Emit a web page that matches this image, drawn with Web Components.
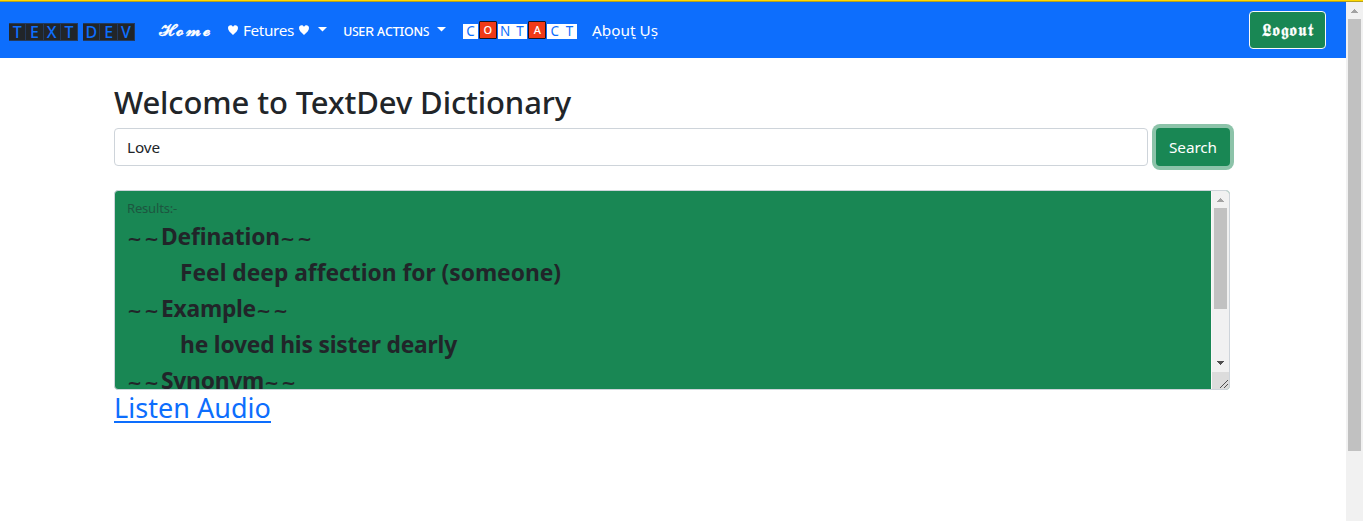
<!DOCTYPE html>
<html lang="en"><head><meta charset="utf-8"><title>TextDev Dictionary</title>
<style>
html,body{margin:0;height:100%;overflow:hidden;background:#fff}
body{font:15.3px/24px "Noto Sans","DejaVu Sans",sans-serif;color:#212529}
</style></head><body><app-page></app-page>
<script>
const define=(name,html,init)=>customElements.define(name,class extends HTMLElement{
  constructor(){super();this.attachShadow({mode:"open"}).innerHTML=html}
  connectedCallback(){if(init)init(this)}
});

/* Text run spread to the width given in its "w" attribute */
define("fit-text",`<style>:host{display:inline-block;white-space:pre}span{display:inline-block}</style><span><slot></slot></span>`,el=>{
  const w=+el.getAttribute("w"),s=el.shadowRoot.querySelector("span");
  const n=[...el.textContent].filter(c=>c!=="\u0323").length;
  el.style.width=w+"px";
  s.style.letterSpacing=((w-s.getBoundingClientRect().width)/n)+"px";
});

define("letter-tile",`<style>
:host{display:flex;align-items:center;justify-content:center;box-sizing:border-box;width:17.3px;height:18px;background:#212529;color:#0d6efd;font-size:16px;line-height:16px;padding-bottom:1px;font-weight:500;border:1px solid #23395c;border-left:0}
:host([kind=light]){width:15px;height:15px;background:#fff;border:0;font-size:13.5px;line-height:15px;padding:0;font-weight:400}
:host([kind=red]){width:18px;height:18px;margin:-2px 1px 2px;background:#f03a17;border:1px solid #191320;border-radius:1px;color:#fff;font-size:11px;line-height:16px;padding:0;font-weight:500}
</style><slot></slot>`);

define("caret-down",`<style>:host{display:block;width:8px;height:4px}svg{display:block}</style><svg width="9" height="5" viewBox="0 0 9 5"><path d="M0 0h9L4.5 4.6z" fill="#fff"/></svg>`);

define("heart-mark",`<style>:host{display:block;width:10px;height:10px}svg{display:block}</style><svg width="10" height="10" viewBox="0 0 10 10"><path d="M5 10C2 7.3 0 5.4 0 3 0 1.200 1.200.2 2.600.2 3.700.2 4.500.8 5 1.700 5.500.8 6.300.2 7.400.2 8.800.2 10 1.200 10 3 10 5.400 8 7.300 5 10z" fill="#fff"/></svg>`);

define("scroll-arrow",`<style>:host{display:flex;justify-content:center;align-items:center;height:17px;color:#a3a3a3}:host([down]){color:#505050;transform:rotate(180deg)}svg{display:block}</style><svg width="7" height="4" shape-rendering="crispEdges"><path d="M3 0h1v1h1v1h1v1h1v1H0V3h1V2h1V1h1z" fill="currentColor"/></svg>`);

define("page-scrollbar",`<style>:host{display:block;width:17px;background:#f1f1f1}.thumb{width:13px;height:432px;margin:0 2px;background:#c1c1c1}</style><scroll-arrow></scroll-arrow><div class="thumb"></div>`);

define("nav-bar",`<style>
:host{display:flex;align-items:center;height:56px;box-sizing:border-box;padding:0 20px 0 9px;background:#0d6efd;color:#fff}
.brand,.contact,.item{display:flex;align-items:center}
.brand{width:127px;margin-right:23px;padding-top:4px;box-sizing:border-box}
.brand i{width:5px}
.home{margin-right:15px;font-size:17px;-webkit-text-stroke:.4px #fff}
.item{height:24px;gap:8px}
.hearts{display:flex;align-items:center;gap:5px;width:82px}
.features{width:115px}
.users{width:120px;white-space:nowrap;gap:8px}
.users fit-text{font-size:16px}
.contact{width:114px;margin-right:15px;padding-top:3px}
caret-down{margin-top:-3px}
.logout{display:flex;align-items:center;justify-content:center;box-sizing:border-box;width:77px;height:38px;margin-left:auto;background:#198754;border:1px solid #f8f9fa;border-radius:4px;font-size:17px;-webkit-text-stroke:.3px #fff}
</style>
<div class="brand"><letter-tile>T</letter-tile><letter-tile>E</letter-tile><letter-tile>X</letter-tile><letter-tile>T</letter-tile><i></i><letter-tile>D</letter-tile><letter-tile>E</letter-tile><letter-tile>V</letter-tile></div>
<fit-text class="home" w="54">𝓗𝓸𝓶𝓮</fit-text>
<div class="item features"><div class="hearts"><heart-mark></heart-mark><fit-text w="51">Fetures</fit-text><heart-mark></heart-mark></div><caret-down></caret-down></div>
<div class="item users"><fit-text w="86">ᴜꜱᴇʀ ᴀᴄᴛɪᴏɴꜱ</fit-text><caret-down></caret-down></div>
<div class="contact"><letter-tile kind="light">C</letter-tile><letter-tile kind="red">O</letter-tile><letter-tile kind="light">N</letter-tile><letter-tile kind="light">T</letter-tile><letter-tile kind="red">A</letter-tile><letter-tile kind="light">C</letter-tile><letter-tile kind="light">T</letter-tile></div>
<fit-text w="66">Ạḅọụṭ ̣Ụṣ</fit-text>
<div class="logout"><fit-text w="52">𝕷𝖔𝖌𝖔𝖚𝖙</fit-text></div>`);

define("search-row",`<style>
:host{display:flex;gap:8px;height:38px}
.field{box-sizing:border-box;width:1034px;padding:6px 12px;border:1px solid #ced4da;border-radius:4px;color:#212529}
.btn{display:flex;align-items:center;justify-content:center;width:74px;background:#198754;border-radius:4px;color:#fff;box-shadow:0 0 0 4px #8cc3a9}
</style><div class="field"><fit-text w="33">Love</fit-text></div><div class="btn"><fit-text w="48">Search</fit-text></div>`);

define("result-box",`<style>
:host{display:flex;box-sizing:border-box;width:1116px;height:200px;border:1px solid #ced4da;border-radius:4px;overflow:hidden;background:#198754}
.text{flex:1;padding:5px 12px 0;overflow:hidden}
.label{height:23px;font-size:13px;line-height:25px;color:#1d5640}
.line{display:flex;align-items:baseline;height:36px;font:700 22.8px/36px "Noto Sans",sans-serif;color:#212529}
.line.in{padding-left:53px}
.t{font:700 18px/30px "DejaVu Sans",sans-serif}
.bar{display:flex;flex-direction:column;width:17px;background:#f1f1f1;border-left:1px solid #f8f8f8}
.thumb{width:13px;height:101px;margin:0 2px;background:#c1c1c1}
.grow{flex:1}
.grip{height:17px;background:#dcdcdc}
svg{display:block}
</style><div class="text"><div class="label"><fit-text w="50">Results:-</fit-text></div>
<div class="line"><fit-text class="t" w="34">~~</fit-text><fit-text w="119">Defination</fit-text><fit-text class="t" w="34">~~</fit-text></div>
<div class="line in"><fit-text w="381">Feel deep affection for (someone)</fit-text></div>
<div class="line"><fit-text class="t" w="34">~~</fit-text><fit-text w="95">Example</fit-text><fit-text class="t" w="34">~~</fit-text></div>
<div class="line in"><fit-text w="277">he loved his sister dearly</fit-text></div>
<div class="line"><fit-text class="t" w="34">~~</fit-text><fit-text w="103">Synonym</fit-text><fit-text class="t" w="34">~~</fit-text></div></div>
<div class="bar"><scroll-arrow></scroll-arrow><div class="thumb"></div><div class="grow"></div><scroll-arrow down></scroll-arrow><div class="grip"><svg width="17" height="17"><path d="M8 16l8-8M12 16l4-4" stroke="#505050" stroke-width="1"/></svg></div></div>`);

define("app-page",`<style>
:host{display:flex;flex-direction:column;height:521px;overflow:hidden}
.edge{height:1px;background:#ffd800;border-bottom:1px solid #b5a01c}
.body{display:flex;flex:1;min-height:0}
.view{flex:1;background:#fff}
main{padding:24px 114px 0}
h1{margin:0;height:46px;font:500 31px/41px "Noto Sans",sans-serif}
search-row{margin-bottom:24px}
a{display:block;box-sizing:border-box;height:33px;width:157px;border-bottom:2px solid #0d6efd;font:400 27px/36px "Noto Sans",sans-serif;color:#0d6efd}
</style>
<div class="edge"></div>
<div class="body"><div class="view"><nav-bar></nav-bar><main><h1><fit-text w="457">Welcome to TextDev Dictionary</fit-text></h1><search-row></search-row><result-box></result-box><a><fit-text w="157">Listen Audio</fit-text></a></main></div><page-scrollbar></page-scrollbar></div>`);
</script></body></html>
